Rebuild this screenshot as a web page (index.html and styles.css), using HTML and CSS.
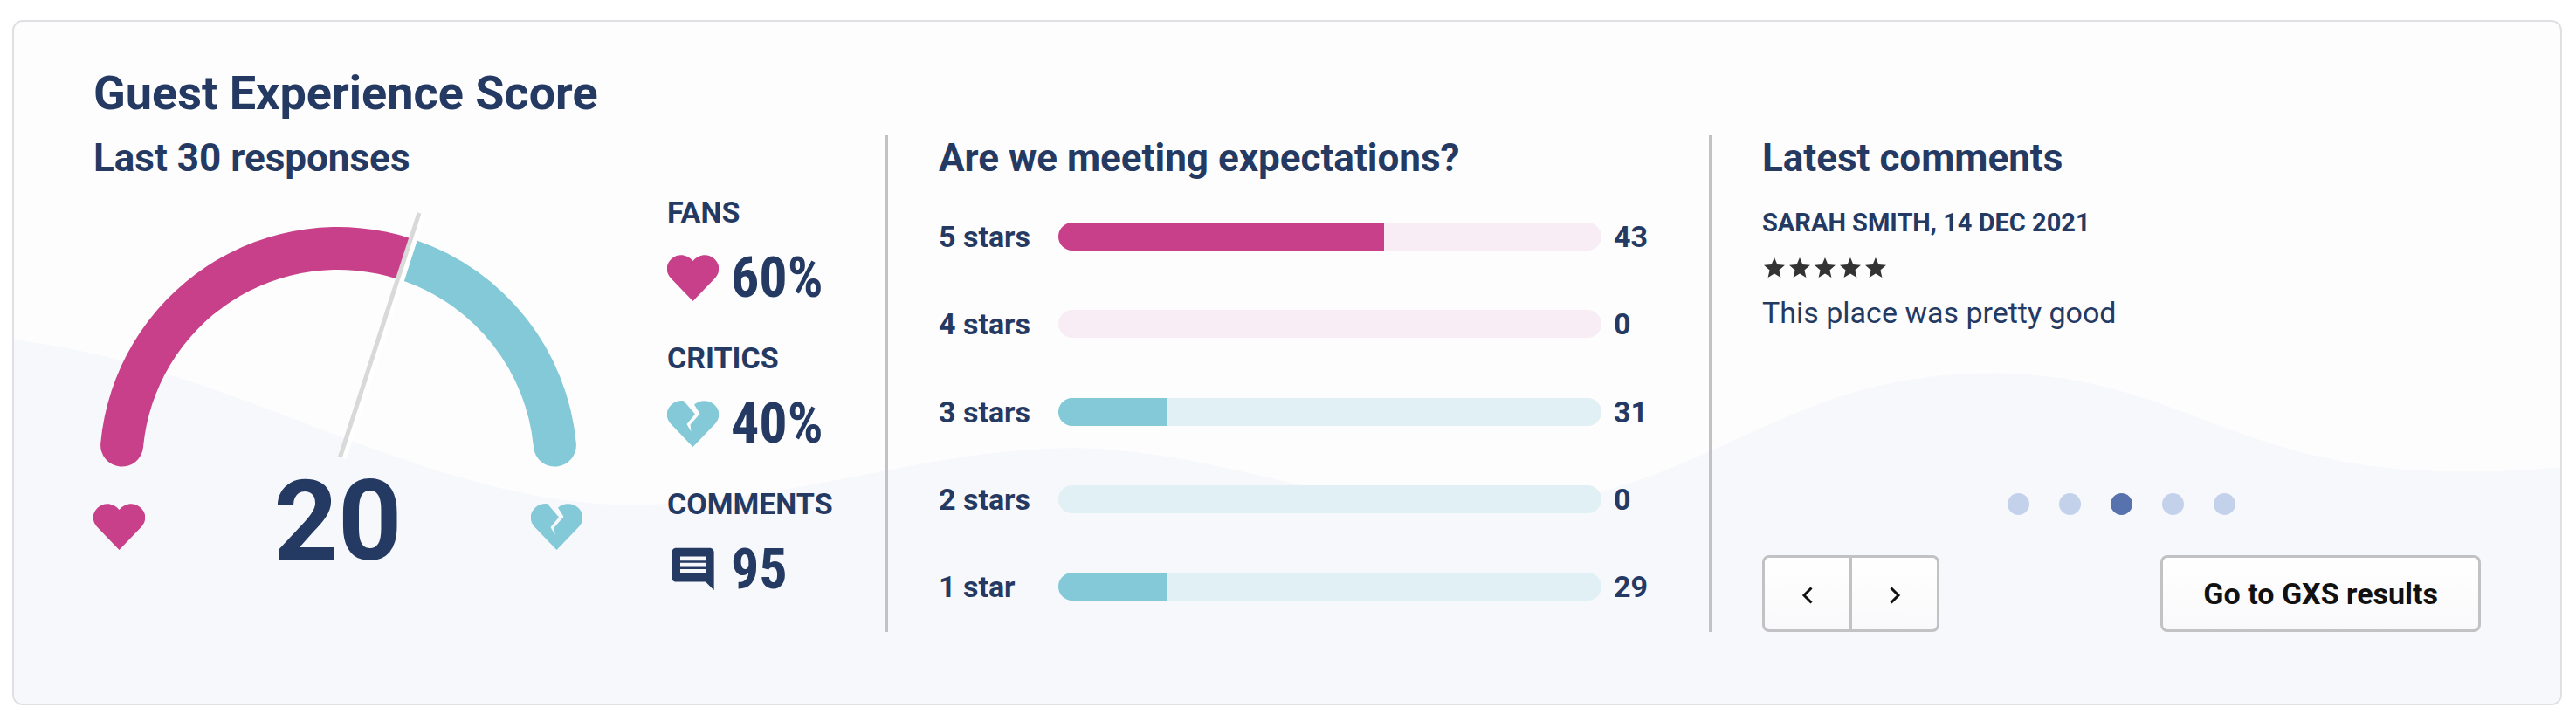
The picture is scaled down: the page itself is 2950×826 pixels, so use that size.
FILE: index.html
```html
<!DOCTYPE html>
<html lang="en">
<head>
  <meta charset="UTF-8">
  <meta name="viewport" content="width=device-width, initial-scale=1.0">

  <title>Guest Experience Score</title>
  <link rel="stylesheet" href="styles.css">
</head>
<body>
<svg class="symbols" aria-hidden="true">
  <symbol id="heart" viewBox="0 0 59 53">
    <path d="M29.500 7C36-1 47-2 54 4.500S61 20 54.500 27L29.500 53 4.500 27C-2 20-2 11 5 4.500S23-1 29.500 7Z"/>
  </symbol>
  <symbol id="broken-heart" viewBox="0 0 59 53">
    <path d="M19 .2C13 -.3 8.500 1.300 5 4.500-2 11-2 20 4.500 27L29.500 53 54.500 27C61 20 61 11 54 4.500 48-1 37.500-1.500 31 4.500L37.500 15 26.500 27.500 27.500 35.500 22.500 27 32 15.500Z"/>
  </symbol>
  <symbol id="star" viewBox="2 2 20 19">
    <path d="M12 17.270L18.180 21l-1.640-7.030L22 9.240l-7.190-.61L12 2 9.190 8.630 2 9.240l5.460 4.730L5.820 21z"/>
  </symbol>
</svg>

<main class="card">
  <svg class="wave" viewBox="0 0 2916 782" preserveAspectRatio="none" aria-hidden="true">
    <path d="M0 365C250 393 470 554 706 554C880 554 1050 489 1210 489C1370 489 1500 557 1674 557C1930 557 2010 403 2264 403C2480 403 2540 516 2804 516C2842 516 2878 515 2916 511V782H0Z"/>
  </svg>

  <h1>Guest Experience Score</h1>

  <div class="columns">
    <section class="summary">
      <div class="gauge">
        <h2>Last 30 responses</h2>
        <svg class="dial" viewBox="0 0 560 300" role="img" aria-label="60% fans, 40% critics">
          <path class="fans" d="M8.200 270.800A273 273 0 0 1 364.400 36.400L349.200 83A224 224 0 0 0 57 275.300A24.500 24.500 0 0 1 8.200 270.800Z"/>
          <path class="critics" d="M370.400 38.400A273 273 0 0 1 552.800 270.800A24.500 24.500 0 0 1 504 275.300A224 224 0 0 0 355.800 84.900Z"/>
          <path class="needle-edge" d="M377.800 8.500L287.200 288"/>
          <path class="needle" d="M373 7L282.500 286.500"/>
        </svg>
        <div class="gauge-labels">
          <svg class="icon fans"><use href="#heart"/></svg>
          <span class="score">20</span>
          <svg class="icon critics"><use href="#broken-heart"/></svg>
        </div>
      </div>

      <dl class="stats">
        <dt>FANS</dt>
        <dd><svg class="icon fans"><use href="#heart"/></svg>60%</dd>
        <dt>CRITICS</dt>
        <dd><svg class="icon critics"><use href="#broken-heart"/></svg>40%</dd>
        <dt>COMMENTS</dt>
        <dd>
          <svg class="icon comment" viewBox="0 0 24 24"><path d="M21.990 4c0-1.100-.89-2-1.990-2H4c-1.100 0-2 .9-2 2v12c0 1.100.9 2 2 2h14l4 4-.01-18zM18 14H6v-2h12v2zm0-3H6V9h12v2zm0-3H6V6h12v2z"/></svg>95
        </dd>
      </dl>
    </section>

    <section class="expectations">
      <h2>Are we meeting expectations?</h2>
      <div class="ratings">
        <div class="rating good"><span>5 stars</span><div class="bar"><div class="fill" style="width: 60%"></div></div><span>43</span></div>
        <div class="rating good"><span>4 stars</span><div class="bar"><div class="fill" style="width: 0%"></div></div><span>0</span></div>
        <div class="rating bad"><span>3 stars</span><div class="bar"><div class="fill" style="width: 20%"></div></div><span>31</span></div>
        <div class="rating bad"><span>2 stars</span><div class="bar"><div class="fill" style="width: 0%"></div></div><span>0</span></div>
        <div class="rating bad"><span>1 star</span><div class="bar"><div class="fill" style="width: 20%"></div></div><span>29</span></div>
      </div>
    </section>

    <section class="comments">
      <h2>Latest comments</h2>
      <h3>SARAH SMITH, 14 DEC 2021</h3>
      <div class="stars" role="img" aria-label="5 out of 5 stars">
        <svg><use href="#star"/></svg>
        <svg><use href="#star"/></svg>
        <svg><use href="#star"/></svg>
        <svg><use href="#star"/></svg>
        <svg><use href="#star"/></svg>
      </div>
      <p>This place was pretty good</p>

      <div class="dots">
        <button class="dot" aria-label="Comment 1"></button>
        <button class="dot" aria-label="Comment 2"></button>
        <button class="dot active" aria-label="Comment 3"></button>
        <button class="dot" aria-label="Comment 4"></button>
        <button class="dot" aria-label="Comment 5"></button>
      </div>

      <div class="actions">
        <div class="pager">
          <button class="btn" aria-label="Previous comment"><svg viewBox="0 0 12 20"><path d="M10.500 1.500L2 10l8.500 8.500"/></svg></button>
          <button class="btn" aria-label="Next comment"><svg viewBox="0 0 12 20"><path d="M1.500 1.500L10 10l-8.500 8.500"/></svg></button>
        </div>
        <button class="btn results">Go to GXS results</button>
      </div>
    </section>
  </div>
</main>
</body>
</html>
```
FILE: styles.css
```css
* {
  box-sizing: border-box;
}

body {
  margin: 23px 16px 16px 14px;
  background: #fff;
  color: #253a63;
  font-family: Roboto, sans-serif;
}

h1, h2, h3, p, dl, dd {
  margin: 0;
}

.symbols {
  display: none;
}

.card {
  position: relative;
  padding: 50px 91px 82px;
  border: 2px solid #e0e0e4;
  border-radius: 12px;
  background: #fdfdfd;
  overflow: hidden;
}

/* background wave, sits behind everything in the card */
.wave {
  position: absolute;
  top: 0;
  left: 0;
  width: 100%;
  height: 100%;
  fill: #f7f8fc;
}

h1 {
  position: relative;
  font-size: 54px;
  line-height: 64px;
  font-weight: 700;
  margin-bottom: 16px;
}

h2 {
  font-size: 44px;
  line-height: 52px;
  font-weight: 700;
}

.columns {
  position: relative;
  display: grid;
  grid-template-columns: 907fr 943fr 884fr;
}

.summary {
  display: flex;
  justify-content: space-between;
  padding-right: 58px;
}

.gauge {
  width: 560px;
}

.dial {
  display: block;
  width: 560px;
  height: 300px;
  margin-top: 30px;
}

.fans { fill: #c84089; }
.critics { fill: #83c9d7; }

.needle, .needle-edge { fill: none; stroke-width: 5; }
.needle { stroke: #d9d9da; }
.needle-edge { stroke: #fff; }

.icon {
  width: 59px;
  height: 53px;
}
.icon.comment { height: 58px; fill: #253a63; }

.gauge-labels {
  display: flex;
  align-items: center;
  justify-content: space-between;
}
.gauge-labels .icon { margin-top: 12px; }

.score {
  font-size: 128px;
  line-height: 120px;
  font-weight: 700;
}

.stats {
  width: 192px;
  margin-top: 68px;
}
.stats dt {
  font-size: 34px;
  line-height: 40px;
  font-weight: 700;
}
.stats dd {
  display: flex;
  align-items: center;
  gap: 14px;
  height: 76px;
  margin: 17px 0 34px;
  font-family: "Roboto Condensed", "Liberation Sans Narrow", sans-serif;
  font-size: 64px;
  font-weight: 700;
}

.expectations, .comments {
  display: flex;
  flex-direction: column;
  border-left: 3px solid #c2c2c4;
  padding-left: 58px;
}

.expectations {
  padding-right: 73px;
}

.ratings {
  display: flex;
  flex: 1;
  flex-direction: column;
  justify-content: space-between;
  padding: 44px 0 32px;
}

.rating {
  display: grid;
  grid-template-columns: 137px 1fr 50px;
  align-items: center;
  font-size: 34px;
  line-height: 40px;
  font-weight: 700;
}
.rating span:last-child { padding-left: 14px; }

.bar {
  height: 32px;
  border-radius: 16px;
  overflow: hidden;
}
.fill { height: 100%; }
.good .bar { background: #f9edf5; }
.good .fill { background: #c84089; }
.bad .bar { background: #e0f0f4; }
.bad .fill { background: #83c9d7; }

h3 {
  margin-top: 30px;
  font-size: 29px;
  line-height: 36px;
  font-weight: 700;
}

.stars {
  display: flex;
  gap: 5px;
  margin: 22px 0 20px 2px;
}
.stars svg {
  width: 24px;
  height: 23px;
  fill: #333;
}

.comments p {
  font-size: 34px;
  line-height: 40px;
}

.dots {
  display: flex;
  justify-content: center;
  gap: 34px;
  margin-top: auto;
  margin-bottom: 46px;
}
.dot {
  width: 25px;
  height: 25px;
  padding: 0;
  border: none;
  border-radius: 50%;
  background: #c4d1ea;
  cursor: pointer;
}
.dot.active { background: #5872ae; }

.actions {
  display: flex;
  justify-content: space-between;
}

.pager {
  display: flex;
}

.btn {
  height: 88px;
  padding: 0 46px;
  border: 3px solid #c2c2c4;
  border-radius: 8px;
  background: linear-gradient(#fff, #f9f9fb);
  color: #111;
  font-family: inherit;
  font-size: 34px;
  font-weight: 700;
  cursor: pointer;
}
.pager .btn {
  width: 103px;
  padding: 0;
}
.pager .btn:first-child { border-radius: 8px 0 0 8px; }
.pager .btn:last-child { border-radius: 0 8px 8px 0; margin-left: -3px; }
.pager svg {
  width: 12px;
  height: 20px;
  overflow: visible;
  fill: none;
  stroke: #111;
  stroke-width: 3;
}
```
